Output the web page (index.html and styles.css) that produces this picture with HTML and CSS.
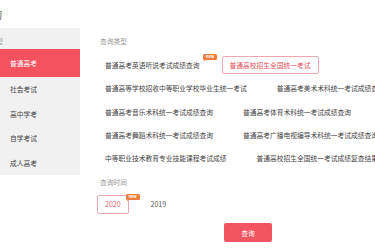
FILE: index.html
```html
<!DOCTYPE html>
<html lang="zh-CN">
<head>
    <meta charset="UTF-8">
    <meta name="viewport" content="width=device-width, initial-scale=1.0">
    <title>成绩查询</title>
    <link rel="stylesheet" href="styles.css">
</head>
<body>
    <div class="header">
        <h1 class="page-title">成绩查询</h1>
    </div>

    <div class="layout">
        <!-- 左侧考试分类 -->
        <div class="sidebar">
            <div class="sidebar-title">查询类型</div>
            <a href="#" class="side-item active">普通高考</a>
            <a href="#" class="side-item">社会考试</a>
            <a href="#" class="side-item">高中学考</a>
            <a href="#" class="side-item">自学考试</a>
            <a href="#" class="side-item">成人高考</a>
        </div>

        <!-- 右侧查询条件 -->
        <div class="main">
            <div class="field-label">查询类型</div>
            <div class="option-list type-list">
                <span class="option">普通高考英语听说考试成绩查询<i class="badge">new</i></span>
                <span class="option selected">普通高校招生全国统一考试</span>
                <span class="option">普通高等学校招收中等职业学校毕业生统一考试</span>
                <span class="option">普通高考美术术科统一考试成绩查询</span>
                <span class="option">普通高考音乐术科统一考试成绩查询</span>
                <span class="option">普通高考体育术科统一考试成绩查询</span>
                <span class="option">普通高考舞蹈术科统一考试成绩查询</span>
                <span class="option">普通高考广播电视编导术科统一考试成绩查询</span>
                <span class="option">中等职业技术教育专业技能课程考试成绩</span>
                <span class="option">普通高校招生全国统一考试成绩复查结果</span>
            </div>

            <div class="field-label time-label">查询时间</div>
            <div class="option-list year-list">
                <span class="option year selected">2020<i class="badge">new</i></span>
                <span class="option year">2019</span>
            </div>

            <button class="search-btn">查询</button>
        </div>
    </div>
</body>
</html>
```

FILE: styles.css
```css
* {
    margin: 0;
    padding: 0;
    box-sizing: border-box;
}

body {
    font-family: 'Noto Sans CJK SC', 'Noto Sans', sans-serif;
    font-size: 6.75px;
    color: #444;
    background: #fff;
    width: 375px;
    height: 250px;
    overflow: hidden;
}

.header {
    height: 28px;
    display: flex;
    align-items: center;
}

.page-title {
    font-size: 10px;
    font-weight: normal;
    color: #555;
    margin-left: -38px;
    white-space: nowrap;
}

.layout {
    display: flex;
    align-items: flex-start;
}

/* 侧边栏 */
.sidebar {
    width: 80px;
    flex-shrink: 0;
    background: #f1f1f1;
    padding-bottom: 0;
}

.sidebar-title {
    height: 21px;
    line-height: 26px;
    color: #999;
    margin-left: -24px;
    white-space: nowrap;
}

.side-item {
    display: block;
    height: 24.5px;
    line-height: 24.5px;
    padding-left: 10px;
    color: #444;
    text-decoration: none;
}

.side-item.active {
    height: 28px;
    line-height: 28px;
    background: #f4525f;
    color: #fff;
}

/* 主体 */
.main {
    flex: 1;
    padding: 8px 0 0 17px;
    overflow: hidden;
}

.field-label {
    line-height: 10px;
    color: #999;
    padding-left: 3px;
}

.option-list {
    display: flex;
    flex-wrap: wrap;
    column-gap: 14px;
    row-gap: 5.25px;
    width: 340px;
}

.type-list {
    margin-top: 10px;
}

.option {
    position: relative;
    height: 18px;
    line-height: 16px;
    padding: 0 7px;
    border: 1px solid transparent;
    border-radius: 2px;
    white-space: nowrap;
    color: #444;
}

.option.selected {
    border-color: #eba7ad;
    color: #e2505c;
}

.badge {
    position: absolute;
    top: -3px;
    right: -10.5px;
    width: 14px;
    height: 5.5px;
    line-height: 5.5px;
    font-size: 4px;
    font-style: normal;
    font-weight: bold;
    text-align: center;
    color: #fff;
    background: #f07c3c;
    border-radius: 1.5px;
}

.badge::after {
    content: '';
    position: absolute;
    left: 1px;
    bottom: -1.5px;
    border-left: 2px solid #f07c3c;
    border-bottom: 1.5px solid transparent;
}

.time-label {
    margin-top: 10px;
}

.year-list {
    margin-top: 8px;
}

.option.year {
    height: 19px;
    line-height: 17px;
    font-size: 7px;
    color: #555;
}

.option.year.selected {
    color: #e0646e;
}

.year .badge {
    top: -2px;
    right: -12px;
}

.search-btn {
    display: block;
    margin: 9px 0 0 127px;
    width: 48px;
    height: 19px;
    border: none;
    border-radius: 2px;
    background: #f35461;
    color: #fff;
    font-family: inherit;
    font-size: 6.75px;
    cursor: pointer;
}
```
